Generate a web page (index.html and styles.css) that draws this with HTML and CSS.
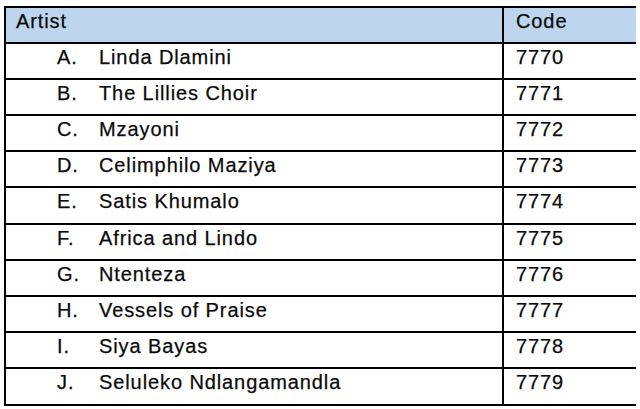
FILE: index.html
```html
<!DOCTYPE html>
<html>
<head>
<meta charset="utf-8">
<link rel="stylesheet" href="styles.css">
</head>
<body>
<table class="artists">
  <thead>
    <tr><th class="col-artist">Artist</th><th class="col-code">Code</th></tr>
  </thead>
  <tbody>
    <tr><td class="col-artist"><span class="idx">A.</span><span class="name">Linda Dlamini</span></td><td class="col-code">7770</td></tr>
    <tr><td class="col-artist"><span class="idx">B.</span><span class="name">The Lillies Choir</span></td><td class="col-code">7771</td></tr>
    <tr><td class="col-artist"><span class="idx">C.</span><span class="name">Mzayoni</span></td><td class="col-code">7772</td></tr>
    <tr><td class="col-artist"><span class="idx">D.</span><span class="name">Celimphilo Maziya</span></td><td class="col-code">7773</td></tr>
    <tr><td class="col-artist"><span class="idx">E.</span><span class="name">Satis Khumalo</span></td><td class="col-code">7774</td></tr>
    <tr><td class="col-artist"><span class="idx">F.</span><span class="name">Africa and Lindo</span></td><td class="col-code">7775</td></tr>
    <tr><td class="col-artist"><span class="idx">G.</span><span class="name">Ntenteza</span></td><td class="col-code">7776</td></tr>
    <tr><td class="col-artist"><span class="idx">H.</span><span class="name">Vessels of Praise</span></td><td class="col-code">7777</td></tr>
    <tr><td class="col-artist"><span class="idx">I.</span><span class="name">Siya Bayas</span></td><td class="col-code">7778</td></tr>
    <tr><td class="col-artist"><span class="idx">J.</span><span class="name">Seluleko Ndlangamandla</span></td><td class="col-code">7779</td></tr>
  </tbody>
</table>
</body>
</html>
```
FILE: styles.css
```css
html, body {
  margin: 0;
  padding: 0;
  background: #ffffff;
}
body {
  padding: 6px 0 0 4px;
  font-family: "Liberation Sans", Arial, sans-serif;
  color: #0a0a0a;
}
.artists {
  border-collapse: collapse;
  width: 632px;
  table-layout: fixed;
  border-top: 2px solid #000;
  border-left: 2px solid #000;
  border-bottom: 2px solid #000;
}
.artists th,
.artists td {
  height: 36px;
  padding: 3px 0 0 0;
  box-sizing: border-box;
  vertical-align: top;
  font-size: 20px;
  line-height: 20px;
  font-weight: normal;
  text-align: left;
  letter-spacing: 0.9px;
  white-space: nowrap;
  -webkit-text-stroke: 0.25px #0a0a0a;
}
.artists tbody tr:nth-child(5n) td {
  height: 37px;
}
.artists thead th {
  background: #bdd6ee;
  border-bottom: 2px solid #000;
}
.artists tbody td {
  border-bottom: 2px solid #000;
}
.artists th.col-artist {
  width: 498px;
  padding-left: 10px;
}
.artists td.col-artist {
  padding-left: 51px;
}
.artists .col-code {
  border-left: 2px solid #000;
  padding-left: 12px;
}
.idx {
  display: inline-block;
  width: 42px;
}
```
